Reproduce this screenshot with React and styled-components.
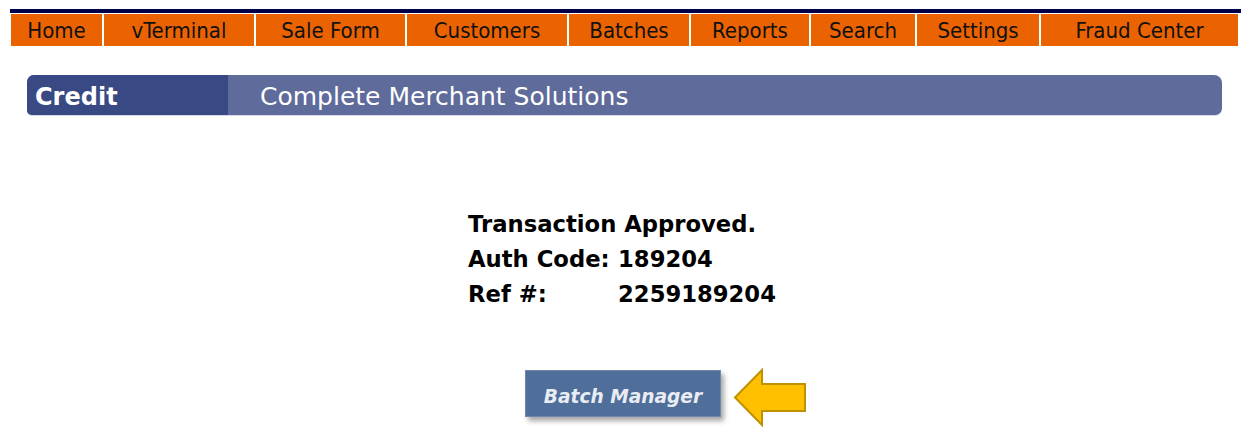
import styled, { createGlobalStyle } from "styled-components"

const Global = createGlobalStyle`
  body {
    margin: 0;
    background: #ffffff;
    font-family: "DejaVu Sans", Verdana, sans-serif;
  }
`

const Page = styled.div`
  width: 1244px;
  height: 437px;
  overflow: hidden;
  padding-top: 9px;
  box-sizing: border-box;
`

const Menu = styled.nav`
  margin-left: 10px;
  width: 1230px;
  border-top: 4px solid #00004a;
  padding: 1px 0 0 1px;
  display: flex;
  gap: 2px;
`

const MenuItem = styled.a`
  height: 32px;
  padding-top: 1px;
  box-sizing: border-box;
  background: #eb6300;
  color: #111111;
  font-family: "DejaVu Sans Condensed", "DejaVu Sans", sans-serif;
  font-size: 22px;
  display: flex;
  align-items: center;
  justify-content: center;
  text-decoration: none;
  flex: none;
`

const Banner = styled.div`
  margin: 29px 0 0 27px;
  width: 1195px;
  height: 40px;
  display: flex;
  background: #5f6b9a;
  border-radius: 7px 8px 7px 5px;
  box-shadow: 0 1px 0 #d5d8e6;
  overflow: hidden;
  color: #ffffff;
  font-size: 25px;
`

const Brand = styled.div`
  width: 193px;
  padding: 3px 0 0 8px;
  background: #384983;
  font-weight: bold;
  font-size: 24px;
  display: flex;
  align-items: center;
`

const Tagline = styled.div`
  padding: 3px 0 0 32px;
  display: flex;
  align-items: center;
`

const Result = styled.table`
  margin: 92px auto 0;
  border-collapse: collapse;
  font-size: 22.7px;
  font-weight: bold;
  color: #000000;
  line-height: 35px;

  td {
    padding: 0;
    white-space: nowrap;
  }
`

const Label = styled.td`
  width: 150px;
`

const Actions = styled.div`
  margin-top: 58px;
  display: flex;
  justify-content: center;
`

const ButtonWrap = styled.div`
  position: relative;
  margin-left: 2px;
`

const BatchButton = styled.button`
  width: 196px;
  height: 47px;
  padding: 5px 0 0;
  border: 1px solid #6f88ab;
  background: #4f6e9a;
  color: #e9edf3;
  font-family: "DejaVu Sans", Verdana, sans-serif;
  font-size: 18.6px;
  font-weight: bold;
  font-style: italic;
  box-shadow: 3px 4px 5px rgba(0, 0, 0, 0.35);
  cursor: pointer;
`

const Pointer = styled.svg`
  position: absolute;
  left: 208px;
  top: -2px;
`

const menu = [
  ["Home", 91],
  ["vTerminal", 150],
  ["Sale Form", 149],
  ["Customers", 160],
  ["Batches", 120],
  ["Reports", 118],
  ["Search", 104],
  ["Settings", 122],
  ["Fraud Center", 197],
]

const App = () => {
  return (
    <>
      <Global />
      <Page>
        <Menu>
          {menu.map(([name, w]) => (
            <MenuItem key={name} href="#" style={{ width: w }}>
              {name}
            </MenuItem>
          ))}
        </Menu>

        <Banner>
          <Brand>Credit</Brand>
          <Tagline>Complete Merchant Solutions</Tagline>
        </Banner>

        <Result>
          <tbody>
            <tr>
              <td colSpan={2}>Transaction Approved.</td>
            </tr>
            <tr>
              <Label>Auth Code:</Label>
              <td>189204</td>
            </tr>
            <tr>
              <Label>Ref #:</Label>
              <td>2259189204</td>
            </tr>
          </tbody>
        </Result>

        <Actions>
          <ButtonWrap>
            <BatchButton>Batch Manager</BatchButton>
            <Pointer width="74" height="59" viewBox="0 0 74 59">
              <polygon
                points="2,29.5 29,2 29,16 72,16 72,43 29,43 29,57"
                fill="#ffc000"
                stroke="#bf9000"
                strokeWidth="2"
                strokeLinejoin="miter"
              />
            </Pointer>
          </ButtonWrap>
        </Actions>
      </Page>
    </>
  )
}

export default App
